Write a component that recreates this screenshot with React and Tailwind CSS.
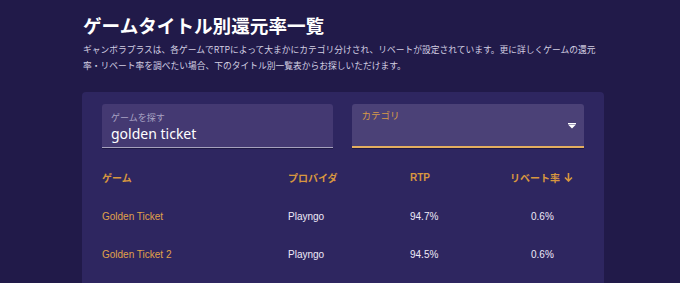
import React from "react";

const jp = { fontFamily: '"Noto Sans CJK JP", "Noto Sans", sans-serif' };
const lat = { fontFamily: '"Liberation Sans", "Noto Sans CJK JP", sans-serif' };

export default function App() {
  const rows = [
    { name: "Golden Ticket", prov: "Playngo", rtp: "94.7%", reb: "0.6%" },
    { name: "Golden Ticket 2", prov: "Playngo", rtp: "94.5%", reb: "0.6%" },
  ];
  return (
    <div className="w-[680px] h-[283px] overflow-hidden bg-[#211a49]" style={jp}>
      <div className="ml-[82px] w-[522px] pt-[10px]">
        <h1 className="text-[18.6px] leading-[30px] font-bold text-white pl-[1px]">
          ゲームタイトル別還元率一覧
        </h1>
        <p className="mt-[2px] text-[8.75px] leading-[16px] text-[#d3cfe2] pl-[1px] pr-[4px]">
          ギャンボラプラスは、各ゲームでRTPによって大まかにカテゴリ分けされ、リベートが設定されています。更に詳しくゲームの還元率・リベート率を調べたい場合、下のタイトル別一覧表からお探しいただけます。
        </p>
        <div className="mt-[18px] h-[200px] rounded-t-[4px] bg-[#2e2660] px-[20px] pt-[12px]">
          <div className="flex gap-[19px]">
            <div className="w-[231px] h-[44px] rounded-t-[3px] bg-[#443972] flex flex-col pl-[9px] pt-[7px] border-b border-[#a6a1bd] shadow-[0_1px_0_#1e1845]">
              <span className="block text-[9px] leading-[14px] text-[#a9a3c4]">ゲームを探す</span>
              <span className="block text-[14px] leading-[18px] text-white" style={{ fontFamily: '"Noto Sans", sans-serif' }}>golden ticket</span>
            </div>
            <div className="w-[233px] h-[44px] rounded-t-[3px] bg-[#4b4177] relative pl-[10px] pt-[4px] border-b-2 border-[#e4ae5f] shadow-[0_1px_0_#1e1845]">
              <span className="block text-[9.5px] leading-[14px] text-[#d89a48]">カテゴリ</span>
              <svg className="absolute right-[8px] top-[19px]" width="8" height="6" viewBox="0 0 8 6">
                <rect x="0" y="0" width="8" height="1" fill="#ffffff" />
                <path d="M0 1.5 L8 1.5 L4 5.5 Z" fill="#ffffff" />
              </svg>
            </div>
          </div>
          <div className="mt-[20px] grid grid-cols-[186px_122px_100px_76px] text-[10px] h-[18px] items-center font-bold text-[#d8973f] whitespace-nowrap">
            <span style={jp}>ゲーム</span>
            <span style={jp}>プロバイダ</span>
            <span style={lat}>RTP</span>
            <span className="flex items-center gap-[4px]" style={jp}>
              リベート率
              <svg width="9" height="10" viewBox="0 0 9 10">
                <path d="M4.5 1 V9 M1 5.5 L4.5 9 L8 5.5" stroke="#d8973f" strokeWidth="1.6" fill="none" />
              </svg>
            </span>
          </div>
          {rows.map((r, i) => (
            <div key={i} className={`grid grid-cols-[186px_122px_100px_76px] text-[10px] h-[18px] items-center ${i === 0 ? "mt-[21px]" : "mt-[20px]"}`} style={lat}>
              <span className="text-[#e0a14a]">{r.name}</span>
              <span className="text-[#eeeaf8]">{r.prov}</span>
              <span className="text-[#eeeaf8]">{r.rtp}</span>
              <span className="text-[#eeeaf8] pl-[21px]">{r.reb}</span>
            </div>
          ))}
        </div>
      </div>
    </div>
  );
}
